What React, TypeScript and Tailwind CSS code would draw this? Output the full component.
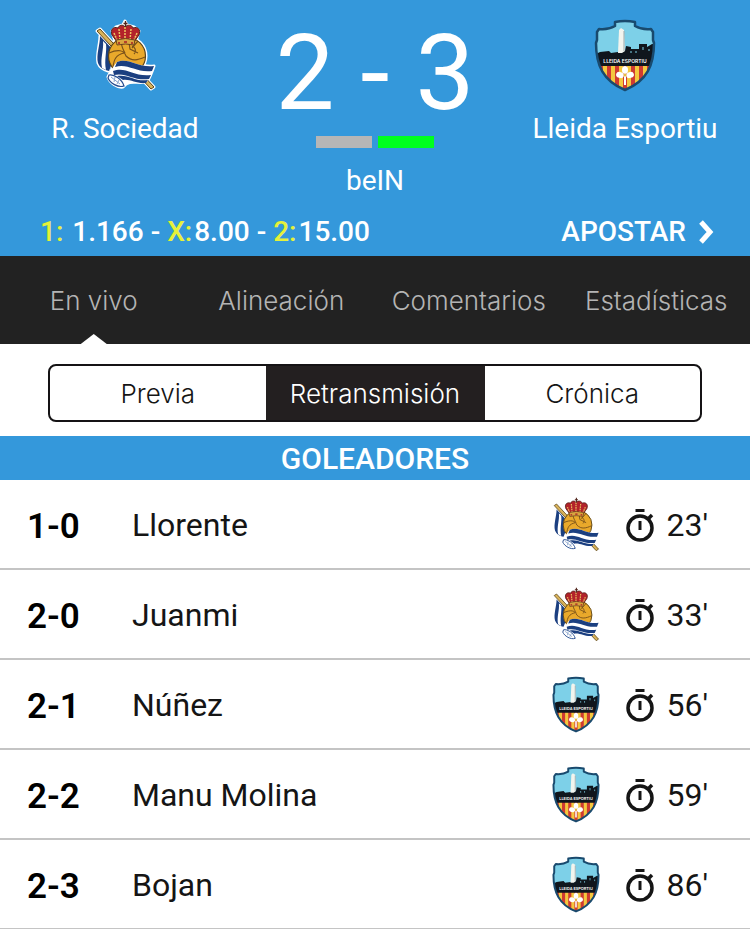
import type { ReactNode } from "react";

type Team = "sociedad" | "lleida";

const sans = "font-['Inter',sans-serif]";

function SociedadCrest({ className }: { className?: string }) {
  return (
    <svg viewBox="0 0 90 90" className={className} role="img" aria-label="R. Sociedad">
      <g stroke="#fff" strokeWidth="3" strokeLinejoin="round" fill="#fff">
        <path d="M17 20l3-2 54 58-3 2z" />
        <path d="M20 25c0 9-4 19-2 27 2 5 6 7 10 8l6-20z" />
        <circle cx="47" cy="45" r="19" />
        <path d="M36 34l-4-14 4-4 7-2 2-4 2 4 7 2 5 4-4 14z" />
        <path d="M28 66c3-6 5-11 9-15 12-5 20 6 37 4-2 6-4 11-7 16-11 2-17-3-24 5-6 1-13-4-15-10z" />
      </g>
      <path d="M20 25c0 9-4 19-2 27 2 5 6 7 11 8l7-18z" fill="#1b3f80" />
      <path d="M23 30c1 9-3 17-1 27l4 2c-2-10 1-18 0-26z" fill="#fff" />
      <path d="M17 20l3-2 54 58-3 2z" fill="#d9b35a" stroke="#5d4517" strokeWidth="1" />
      <circle cx="47" cy="45" r="18.500" fill="#e9a92b" stroke="#5d4517" strokeWidth="1.200" />
      <path
        d="M29 42c9-4 15-3 17 3 6 6 12 4 19 1M44 42c-8 2-10 6-11 14M42 29c-2 5 1 9 3 13M49 31l1 7 8 4M52 37l6-7M54 43c3-3 1-7-2-8"
        fill="none"
        stroke="#7a521a"
        strokeWidth="1.200"
      />
      <path d="M37 31l-5-7c-2-5 1-9 6-7 1-3 5-4 7-1 3-3 7-2 8 1 5-2 8 2 6 7l-5 7z" fill="#b3222a" stroke="#50231a" strokeWidth="1" />
      <path d="M45 16v13M39 18l1 11M51 18l-1 11M34 22l3 7M57 22l-3 7" stroke="#edc560" strokeWidth="1.500" strokeDasharray="2 1" />
      <path d="M36 29q9.500-3 19 0l-1 5q-8.500-2-17 0z" fill="#d9a53f" stroke="#623b1c" strokeWidth=".9" />
      <path d="M38 32h2M44 31h3M51 32h2" stroke="#a91f25" strokeWidth="1.500" />
      <path d="M45.500 10v6M43.500 12.500h4" stroke="#50231a" strokeWidth="1.400" />
      <path d="M28 66c3-6 5-11 9-15 12-5 20 6 37 4-2 6-4 11-7 16-11 2-17-3-24 5-6 1-13-4-15-10z" fill="#fff" />
      <path d="M37 51c12-5 20 6 37 4l-2 5c-16 2-24-8-37-4z" fill="#1b3f80" />
      <path d="M33 60c13-5 20 6 38 4l-2 4c-16 2-23-7-35-4z" fill="#1b3f80" />
      <path d="M37 65c12-2 18 6 31 4l-2 3c-10 1-15-4-23-3z" fill="#1b3f80" />
      <path d="M29 64c5-1 13 4 15 11-6 2-14-3-16-8z" fill="#fff" stroke="#234b8f" strokeWidth="1.200" />
      <path d="M31 66l9 7M35 66l-1 5M39 69l-2 4" stroke="#86a2cc" strokeWidth="1" />
    </svg>
  );
}

function LleidaCrest({ className }: { className?: string }) {
  const outline =
    "M35 11Q45 9 55 11V15Q62 19 71 18L73 21V29L74 32C74 54 67 70 45 79C23 70 16 54 16 32L17 29V21L19 18Q28 19 35 15Z";
  return (
    <svg viewBox="0 0 90 90" className={className} role="img" aria-label="Lleida Esportiu">
      <defs>
        <clipPath id="lleida-shield">
          <path d={outline} />
        </clipPath>
      </defs>
      <g clipPath="url(#lleida-shield)">
        <path fill="#7dd0e8" d="M10 5h70v50H10z" />
        <path fill="#f4c83e" d="M10 54h70v30H10z" />
        <path fill="#cf3b32" d="M19 54h4v30h-4zM27 54h4v30h-4zM35 54h4v30h-4zM43 54h4v30h-4zM51 54h4v30h-4zM59 54h4v30h-4zM67 54h4v30h-4z" />
        <path fill="#10161d" d="M14 44l6-3 9-1 2 2 7-1 7-1 1-5 5 1v2h8v-5h8v3l5-3h4v22H14z" />
        <path fill="#f2f4ee" d="M38 42l1-23 2-2 3 2 1 21-3 2z" />
        <path stroke="#9aa8aa" strokeWidth="1" d="M44 20v20" />
        <path stroke="#7dd0e8" strokeWidth="1" d="M51 40v2M56 40v2M63 36v3M69 38v2" />
        <g fill="#fff">
          <ellipse cx="45" cy="59" rx="3" ry="4" />
          <ellipse cx="40" cy="64" rx="4" ry="3" transform="rotate(20 40 64)" />
          <ellipse cx="50" cy="64" rx="4" ry="3" transform="rotate(-20 50 64)" />
          <path d="M44 65h2v9h-2z" />
        </g>
        <circle cx="45" cy="64" r="1.500" fill="#e8bd42" />
      </g>
      <text x="45" y="52" textAnchor="middle" fontSize="5" fontWeight="600" fill="#fff" className={sans}>LLEIDA ESPORTIU</text>
      <path d={outline} fill="none" stroke="#194a6e" strokeWidth="2.500" strokeLinejoin="round" />
    </svg>
  );
}

function Crest({ team, className }: { team: Team; className: string }) {
  return team === "sociedad" ? <SociedadCrest className={className} /> : <LleidaCrest className={className} />;
}

function Stopwatch() {
  return (
    <svg viewBox="0 0 30 34" className="h-[34px] w-[30px]" fill="none" stroke="#151515" aria-hidden="true">
      <circle cx="14" cy="20" r="12" strokeWidth="3.500" />
      <path d="M9.500 2.500h9" strokeWidth="3" />
      <path d="M14 13v9" strokeWidth="3" />
      <path d="M22 11l4-4" strokeWidth="3.500" />
    </svg>
  );
}

function TeamBlock({ team, children }: { team: Team; children: ReactNode }) {
  return (
    <div className="flex w-[250px] flex-col items-center pt-[11px]">
      <Crest team={team} className="size-[90px]" />
      <h2 className="mt-3 text-[28px] leading-8 whitespace-nowrap">{children}</h2>
    </div>
  );
}

function Odd({ label, value }: { label: string; value: string }) {
  return (
    <>
      <span className="mr-0.5 text-[#e5f13b]">{label}</span>
      {value}
    </>
  );
}

const tabs = [
  { label: "En vivo", href: "#en-vivo", active: true },
  { label: "Alineación", href: "#alineacion", active: false },
  { label: "Comentarios", href: "#comentarios", active: false },
  { label: "Estadísticas", href: "#estadisticas", active: false },
];

const goals: { score: string; name: string; team: Team; minute: string }[] = [
  { score: "1-0", name: "Llorente", team: "sociedad", minute: "23'" },
  { score: "2-0", name: "Juanmi", team: "sociedad", minute: "33'" },
  { score: "2-1", name: "Núñez", team: "lleida", minute: "56'" },
  { score: "2-2", name: "Manu Molina", team: "lleida", minute: "59'" },
  { score: "2-3", name: "Bojan", team: "lleida", minute: "86'" },
];

export default function App() {
  return (
    <main className="bg-white font-['Roboto',sans-serif] text-[#151515]">
      <header className="bg-[#3498db] text-white">
        <div className="flex h-[206px] justify-between">
          <TeamBlock team="sociedad">R. Sociedad</TeamBlock>
          <div className="flex flex-col items-center pt-6">
            <h1 className="text-[105px] leading-[100px] whitespace-nowrap">2 - 3</h1>
            <div className="mt-3 flex gap-[6px]">
              <span className="h-3 w-14 bg-[#b6b6b6]" />
              <span className="h-3 w-14 bg-[#00ff1e]" />
            </div>
            <p className="mt-[17px] text-[28px] leading-8">beIN</p>
          </div>
          <TeamBlock team="lleida">Lleida Esportiu</TeamBlock>
        </div>
        <div className="flex h-[50px] items-center justify-between pt-0.5 pr-9 pl-10 text-[28px] font-medium">
          <p className="flex whitespace-pre">
            <Odd label="1: " value="1.166 - " />
            <Odd label="X:" value="8.00 - " />
            <Odd label="2:" value="15.00" />
          </p>
          <button className="flex items-center gap-3">
            APOSTAR
            <svg viewBox="0 0 16 24" className="h-6 w-4" fill="none" stroke="currentColor" strokeWidth="5" aria-hidden="true">
              <path d="M3 2l9 10-9 10" />
            </svg>
          </button>
        </div>
      </header>

      <nav className={`flex h-[88px] bg-[#222] text-[26px] font-light text-[#b4b4b4] ${sans}`}>
        {tabs.map((tab) => (
          <a key={tab.label} href={tab.href} className="relative flex flex-1 items-center justify-center">
            {tab.label}
            {tab.active && (
              <span className="absolute bottom-0 left-1/2 h-[10px] w-[26px] -translate-x-1/2 bg-white [clip-path:polygon(50%_0,100%_100%,0_100%)]" />
            )}
          </a>
        ))}
      </nav>

      <div className={`mx-12 mt-5 mb-[14px] flex h-[58px] overflow-hidden rounded-lg border-2 border-[#151315] text-[26px] font-[350] ${sans}`}>
        <button className="flex-1">Previa</button>
        <button className="w-[219px] bg-[#231f20] text-white">Retransmisión</button>
        <button className="flex-1">Crónica</button>
      </div>

      <h2 className="flex h-11 items-center justify-center bg-[#3498db] text-[30px] font-medium text-white">GOLEADORES</h2>
      <ul>
        {goals.map((goal) => (
          <li key={goal.score} className="flex h-[90px] items-center border-b-2 border-[#c4c4c4] pt-0.5 pr-[42px] pl-[27px]">
            <span className="w-[105px] pt-1 text-[35px] font-semibold text-black">{goal.score}</span>
            <span className="flex-1 text-[32px]">{goal.name}</span>
            <Crest team={goal.team} className="mr-[15px] size-[70px]" />
            <Stopwatch />
            <span className="ml-[10px] text-[32px]">{goal.minute}</span>
          </li>
        ))}
      </ul>
    </main>
  );
}
